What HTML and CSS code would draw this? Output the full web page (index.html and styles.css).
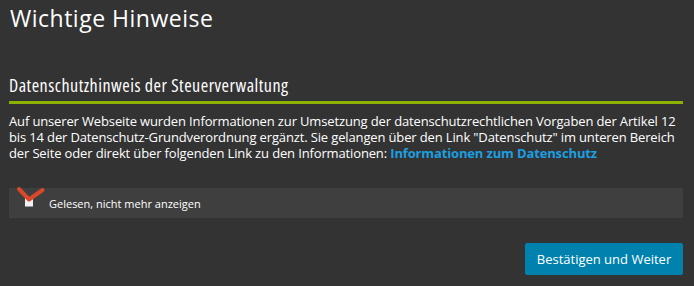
FILE: index.html
```html
<!DOCTYPE html>
<html lang="de">
<head>
<meta charset="utf-8">
<title>Wichtige Hinweise</title>
<link rel="stylesheet" href="styles.css">
</head>
<body>
<div class="dialog">
  <h1 class="title">Wichtige Hinweise</h1>
  <section class="notice">
    <h2 class="notice-head">Datenschutzhinweis der Steuerverwaltung</h2>
    <p class="notice-text">Auf unserer Webseite wurden Informationen zur Umsetzung der datenschutzrechtlichen Vorgaben der Artikel 12 bis 14 der Datenschutz-Grundverordnung ergänzt. Sie gelangen über den Link "Datenschutz" im unteren Bereich der Seite oder direkt über folgenden Link zu den Informationen: <a class="link" href="#">Informationen zum Datenschutz</a></p>
    <label class="check-row">
      <span class="check-box">
        <svg class="check-mark" width="40" height="24" viewBox="0 0 40 24"><path d="M10 5 L20 15.5 L33.5 6" fill="none" stroke="#d9482a" stroke-width="4" stroke-linecap="round" stroke-linejoin="round"/></svg>
      </span>
      <span class="check-label">Gelesen, nicht mehr anzeigen</span>
    </label>
  </section>
  <div class="actions">
    <button class="btn" type="button">Bestätigen und Weiter</button>
  </div>
</div>
</body>
</html>
```
FILE: styles.css
```css
html, body {
  margin: 0;
  padding: 0;
  background: #333333;
}
body {
  font-family: "Open Sans", "Noto Sans", sans-serif;
  color: #ffffff;
  width: 694px;
  height: 286px;
  overflow: hidden;
}
.dialog {
  padding: 0 11px 0 9px;
}
.title {
  margin: 0;
  padding: 3px 0 0 1px;
  font-size: 23px;
  letter-spacing: 0.5px;
  font-weight: 400;
  line-height: 30px;
}
.notice {
  margin-top: 40px;
}
.notice-head {
  margin: 0;
  font-size: 18px;
  font-weight: 400;
  line-height: 24px;
  font-stretch: 75%;
  letter-spacing: 0.5px;
  padding-bottom: 4px;
  border-bottom: 3px solid #8db100;
}
.notice-text {
  margin: 9px 0 0;
  font-size: 13px;
  line-height: 16px;
  letter-spacing: -0.14px;
}
.link {
  color: #1b9fe0;
  font-weight: 700;
  text-decoration: none;
}
.check-row {
  margin-top: 27px;
  display: flex;
  align-items: center;
  height: 30px;
  background: #3f3f3f;
}
.check-box {
  position: relative;
  align-self: flex-start;
  flex: none;
  width: 8px;
  height: 8px;
  margin: 10px 0 0 16px;
  background: #f2f2f2;
  border-bottom: 1px solid #9a9a9a;
}
.check-mark {
  position: absolute;
  left: -16px;
  top: -14px;
}
.check-label {
  margin-left: 16px;
  font-size: 11px;
}
.actions {
  display: flex;
  justify-content: flex-end;
  margin-top: 25px;
}
.btn {
  font-family: inherit;
  font-size: 13px;
  color: #ffffff;
  background: #0081ae;
  border: 0;
  border-radius: 2px;
  width: 158px;
  height: 32px;
  padding: 0;
}
```
